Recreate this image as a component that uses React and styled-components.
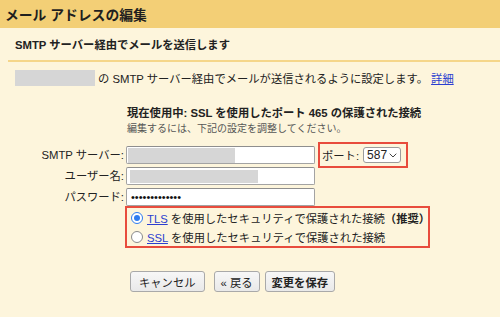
import React from "react";
import styled, { createGlobalStyle } from "styled-components";

const Global = createGlobalStyle`
  html, body { margin: 0; padding: 0; background: #fdf5dc; }
  body {
    font-family: "Liberation Sans", Arial, "Noto Sans CJK JP", sans-serif;
    font-size: 11.3px;
    color: #222;
    width: 500px;
    height: 317px;
    overflow: hidden;
  }
`;

const Page = styled.div`
  width: 500px;
  height: 317px;
  background: #fdf5dc;
`;

const Header = styled.div`
  height: 28px;
  background: #f3cf76;
  display: flex;
  align-items: center;
  padding-left: 5px;
  font-size: 13.8px;
  font-weight: bold;
  color: #1f1f1f;
`;

const SubHeader = styled.div`
  height: 32px;
  margin-left: 8px;
  padding-left: 7px;
  display: flex;
  align-items: center;
  font-weight: bold;
  border-bottom: 2px solid #f5d68a;
`;

const Desc = styled.div`
  margin-top: 8px;
  padding-left: 15px;
  display: flex;
  align-items: center;
  gap: 3px;
  height: 16px;
`;

const Redacted = styled.span`
  display: inline-block;
  width: ${(p) => p.$w}px;
  height: ${(p) => p.$h}px;
  background: #d6d6d6;
  flex: none;
`;

const Link = styled.a`
  color: #2c3fd0;
  text-decoration: underline;
  cursor: pointer;
`;

const Form = styled.div`
  margin-top: 20px;
  display: grid;
  grid-template-columns: 124px 189px auto;
  column-gap: 2px;
  align-items: center;
`;

const Status = styled.div`
  grid-column: 2 / 4;
  padding-left: 1px;
  font-weight: bold;
  line-height: 15px;
  white-space: nowrap;
`;

const Hint = styled.div`
  grid-column: 2 / 4;
  padding-left: 1px;
  font-size: 10px;
  color: #555;
  line-height: 14px;
  margin-top: 1px;
  margin-bottom: 10px;
  white-space: nowrap;
`;

const Label = styled.div`
  text-align: right;
  white-space: nowrap;
  height: 18px;
  line-height: 18px;
  margin-bottom: ${(p) => (p.$last ? 0 : 3)}px;
`;

const Field = styled.div`
  height: 18px;
  box-sizing: border-box;
  background: #fff;
  border: 1px solid #a3a3a3;
  border-top-color: #8e8e8e;
  border-radius: 2px;
  display: flex;
  align-items: center;
  padding-left: ${(p) => p.$pad ?? 1}px;
  margin-bottom: ${(p) => (p.$last ? 0 : 3)}px;
  overflow: hidden;
`;

const Dots = styled.span`
  font-size: 11px;
  line-height: 1;
  color: #111;
`;

const Extra = styled.div`
  height: 18px;
  margin-bottom: 3px;
  display: flex;
  align-items: center;
`;

const PortBox = styled.div`
  margin-left: 1px;
  margin-top: -4px;
  margin-bottom: -4px;
  height: 26px;
  box-sizing: border-box;
  border: 2px solid #e84c3d;
  display: flex;
  align-items: center;
  gap: 4px;
  padding: 0 5px 0 2px;
`;

const Select = styled.div`
  height: 16px;
  box-sizing: border-box;
  width: 38px;
  background: #fff;
  border: 1px solid #9c9c9c;
  border-radius: 3px;
  display: flex;
  align-items: center;
  justify-content: space-between;
  padding: 0 3px 0 3px;
  font-size: 12px;
`;

const RadioBox = styled.div`
  grid-column: 2 / 4;
  margin-left: -1px;
  width: 305px;
  box-sizing: border-box;
  border: 2px solid #e84c3d;
  padding: 0 0 0 4px;
  display: flex;
  flex-direction: column;
`;

const RadioRow = styled.label`
  display: flex;
  align-items: center;
  height: 19px;
  gap: 3px;
  white-space: nowrap;
`;

const Radio = styled.span`
  width: 12px;
  height: 12px;
  box-sizing: border-box;
  border-radius: 50%;
  background: #fff;
  border: ${(p) => (p.$on ? "1.5px solid #2f7cf0" : "1px solid #8a8a8a")};
  display: flex;
  align-items: center;
  justify-content: center;
  flex: none;
  margin-right: 1px;
  &::after {
    content: "";
    display: ${(p) => (p.$on ? "block" : "none")};
    width: 6px;
    height: 6px;
    border-radius: 50%;
    background: #2f7cf0;
  }
`;

const Buttons = styled.div`
  grid-column: 2 / 4;
  margin-top: 23px;
  margin-left: 4px;
  display: flex;
`;

const Button = styled.button`
  font-family: inherit;
  font-size: 11.3px;
  font-weight: ${(p) => (p.$primary ? "bold" : "normal")};
  color: #222;
  height: 21px;
  padding: 0 ${(p) => p.$px ?? 8}px;
  background: linear-gradient(#f7f7f7, #e9e9e9);
  border: 1px solid #a9a9a9;
  border-radius: 3px;
  display: flex;
  align-items: center;
  margin-right: ${(p) => p.$mr ?? 0}px;
`;

const Chevron = () => (
  <svg width="8" height="5" viewBox="0 0 8 5" fill="none">
    <path d="M0.7 0.7 L4 4 L7.3 0.7" stroke="#444" strokeWidth="1" />
  </svg>
);

export default function App() {
  return (
    <Page>
      <Global />
      <Header>メール アドレスの編集</Header>
      <SubHeader>SMTP サーバー経由でメールを送信します</SubHeader>
      <Desc>
        <Redacted $w={80} $h={16} />
        <span>
          の SMTP サーバー経由でメールが送信されるように設定します。 <Link>詳細</Link>
        </span>
      </Desc>
      <Form>
        <Status>現在使用中: SSL を使用したポート 465 の保護された接続</Status>
        <Hint>編集するには、下記の設定を調整してください。</Hint>

        <Label>SMTP サーバー:</Label>
        <Field>
          <Redacted $w={107} $h={15} />
        </Field>
        <Extra>
          <PortBox>
            <span>ポート:</span>
            <Select>
              <span>587</span>
              <Chevron />
            </Select>
          </PortBox>
        </Extra>

        <Label>ユーザー名:</Label>
        <Field $pad={3}>
          <Redacted $w={128} $h={13} />
        </Field>
        <Extra />

        <Label $last>パスワード:</Label>
        <Field $last $pad={4}>
          <Dots>•••••••••••••</Dots>
        </Field>
        <div />

        <div />
        <RadioBox>
          <RadioRow>
            <Radio $on />
            <span>
              <Link>TLS</Link> を使用したセキュリティで保護された接続<b>（推奨）</b>
            </span>
          </RadioRow>
          <RadioRow>
            <Radio />
            <span>
              <Link>SSL</Link> を使用したセキュリティで保護された接続
            </span>
          </RadioRow>
        </RadioBox>

        <div />
        <Buttons>
          <Button $mr={9}>キャンセル</Button>
          <Button $px={6} $mr={5}>« 戻る</Button>
          <Button $primary $px={6}>変更を保存</Button>
        </Buttons>
      </Form>
    </Page>
  );
}
